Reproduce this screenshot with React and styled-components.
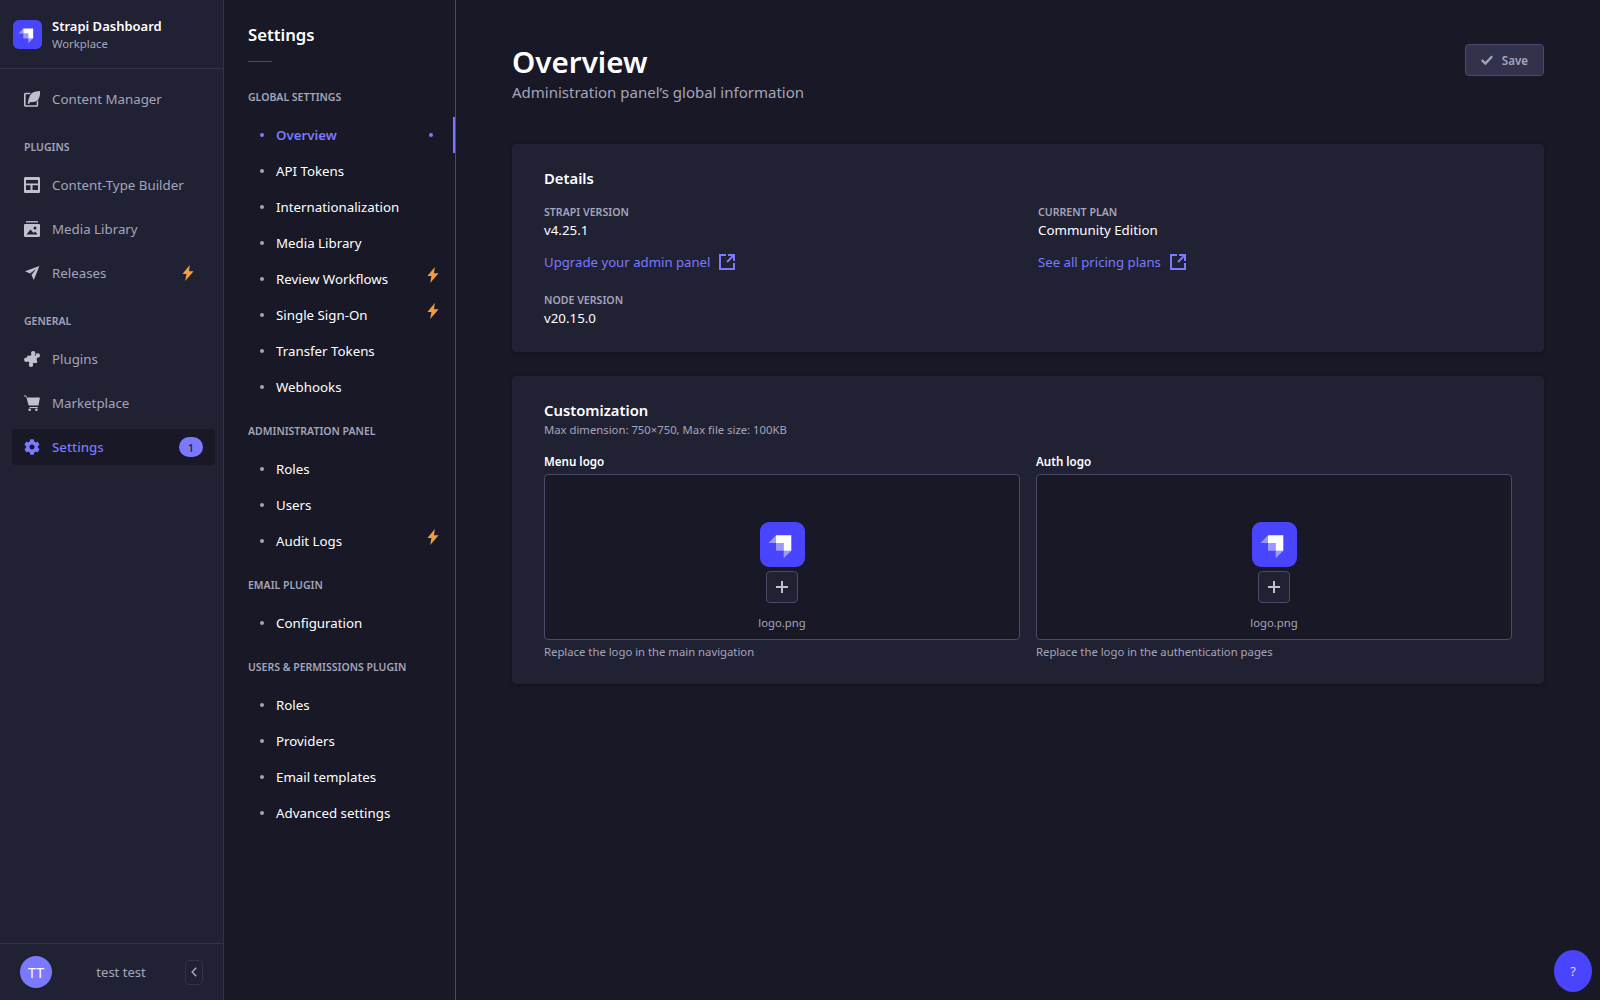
import React from "react";
import styled, { createGlobalStyle } from "styled-components";
import { FaCog } from "react-icons/fa";

const Global = createGlobalStyle`
  html, body { margin: 0; padding: 0; background: #181826; }
  * { box-sizing: border-box; }
  body { font-family: "Noto Sans", "Open Sans", sans-serif; }
`;

const Page = styled.div`
  display: flex;
  width: 1600px;
  height: 1000px;
  overflow: hidden;
  background: #181826;
  position: relative;
`;

const MainNav = styled.nav`
  width: 224px;
  flex: none;
  height: 100%;
  background: #212134;
  border-right: 1px solid #32324d;
  display: flex;
  flex-direction: column;
`;
const Brand = styled.header`
  height: 69px;
  flex: none;
  border-bottom: 1px solid #32324d;
  display: flex;
  align-items: center;
  padding-left: 13px;
  gap: 10px;
`;
const BrandText = styled.div`
  display: flex;
  flex-direction: column;
`;
const BrandName = styled.span`
  font-size: 13px;
  line-height: 18px;
  font-weight: 600;
  color: #ffffff;
`;
const BrandSub = styled.span`
  font-size: 11.3px;
  line-height: 17px;
  color: #a5a5ba;
`;
const NavBody = styled.div`
  flex: 1;
  padding: 12px 8px 0 12px;
  display: flex;
  flex-direction: column;
  gap: 8px;
`;
const NavLabel = styled.div`
  font-size: 10.5px;
  line-height: 16px;
  font-weight: 600;
  color: #a5a5ba;
  text-transform: uppercase;
  padding-left: 12px;
  margin: 14px 0 4px;
`;
const NavItem = styled.a`
  height: 36px;
  display: flex;
  align-items: center;
  padding: 0 12px;
  gap: 12px;
  border-radius: 4px;
  font-size: 13.3px;
  color: ${(p) => (p.$active ? "#7b79ff" : "#a5a5ba")};
  background: ${(p) => (p.$active ? "#181826" : "transparent")};
  font-weight: ${(p) => (p.$active ? 500 : 400)};
`;
const NavIcon = styled.span`
  width: 16px;
  height: 16px;
  flex: none;
  display: flex;
  color: ${(p) => (p.$active ? "#7b79ff" : "#c0c0cf")};
  svg { width: 16px; height: 16px; display: block; }
`;
const NavText = styled.span`
  flex: 1;
`;
const NavBolt = styled.span`
  display: flex;
  margin: -1px 9px 0 0;
`;
const Badge = styled.span`
  width: 24px;
  height: 20px;
  border-radius: 10px;
  background: #7b79ff;
  color: #212134;
  font-size: 11px;
  display: flex;
  align-items: center;
  justify-content: center;
`;
const NavFooter = styled.footer`
  height: 57px;
  flex: none;
  border-top: 1px solid #32324d;
  display: flex;
  align-items: center;
  padding: 0 20px;
`;
const Avatar = styled.span`
  width: 32px;
  height: 32px;
  border-radius: 50%;
  background: #7b79ff;
  color: #ffffff;
  font-size: 14px;
  display: flex;
  align-items: center;
  justify-content: center;
  flex: none;
`;
const UserName = styled.span`
  flex: 1;
  text-align: center;
  padding-left: 5px;
  font-size: 13px;
  color: #a5a5ba;
`;
const Collapse = styled.button`
  width: 18px;
  height: 25px;
  padding: 0;
  background: transparent;
  border: 1px solid #32324d;
  border-radius: 4px;
  display: flex;
  align-items: center;
  justify-content: center;
  color: #a5a5ba;
`;

const SubNav = styled.aside`
  width: 232px;
  flex: none;
  height: 100%;
  border-right: 1px solid #4a4a6a;
  padding-top: 23px;
  display: flex;
  flex-direction: column;
`;
const SubTitle = styled.h2`
  margin: 0 0 0 24px;
  font-size: 16.7px;
  line-height: 24px;
  font-weight: 600;
  color: #ffffff;
`;
const SubDivider = styled.div`
  width: 24px;
  height: 1px;
  background: #4a4a6a;
  margin: 14px 0 0 24px;
`;
const SubGroup = styled.section`
  display: flex;
  flex-direction: column;
  margin-top: 18px;
  &:first-of-type { margin-top: 27px; }
`;
const SubLabel = styled.div`
  margin-left: 24px;
  font-size: 10.5px;
  line-height: 16px;
  font-weight: 600;
  color: #a5a5ba;
  text-transform: uppercase;
  margin-bottom: 12px;
`;
const SubItem = styled.a`
  position: relative;
  height: 36px;
  display: flex;
  align-items: center;
  padding: 0 0 0 36px;
  gap: 12px;
  font-size: 13.3px;
  color: ${(p) => (p.$active ? "#7b79ff" : "#ffffff")};
  font-weight: ${(p) => (p.$active ? 600 : 400)};
`;
const Bullet = styled.span`
  width: 4px;
  height: 4px;
  border-radius: 50%;
  flex: none;
  background: ${(p) => (p.$active ? "#7b79ff" : "#a5a5ba")};
`;
const SubDotRight = styled(Bullet)`
  position: absolute;
  right: 22px;
  top: 16px;
`;
const SubBolt = styled.span`
  position: absolute;
  right: 16px;
  top: 6px;
  display: flex;
`;
const ActiveBar = styled.span`
  position: absolute;
  right: 0;
  top: 0;
  width: 2px;
  height: 36px;
  background: #7b79ff;
`;

const Main = styled.main`
  flex: 1;
  padding: 0 56px;
`;
const Head = styled.header`
  display: flex;
  justify-content: space-between;
  align-items: flex-start;
  padding-top: 44px;
  height: 144px;
`;
const H1 = styled.h1`
  margin: 0;
  font-size: 29.6px;
  line-height: 36px;
  font-weight: 600;
  color: #ffffff;
`;
const Subtitle = styled.p`
  margin: 0;
  font-size: 15px;
  line-height: 24px;
  color: #a5a5ba;
`;
const SaveButton = styled.button`
  width: 79px;
  height: 32px;
  background: #32324d;
  border: 1px solid #4a4a6a;
  border-radius: 4px;
  display: flex;
  align-items: center;
  justify-content: center;
  gap: 9px;
  padding: 0;
  color: #a5a5ba;
  font-family: inherit;
  font-size: 11.6px;
  font-weight: 600;
`;
const Card = styled.section`
  background: #212134;
  border-radius: 4px;
  padding: 22px 32px 24px;
  margin-bottom: 24px;
  box-shadow: 0 1px 4px rgba(3, 3, 5, 0.2);
`;
const CardTitle = styled.h3`
  margin: 0;
  font-size: 14.8px;
  line-height: 24px;
  font-weight: 600;
  color: #ffffff;
`;
const DetailGrid = styled.div`
  display: grid;
  grid-template-columns: 1fr 1fr;
  column-gap: 20px;
  margin-top: 14px;
`;
const Field = styled.div`
  display: flex;
  flex-direction: column;
`;
const FieldLabel = styled.span`
  font-size: 10.6px;
  line-height: 16px;
  font-weight: 600;
  color: #a5a5ba;
  text-transform: uppercase;
`;
const FieldValue = styled.span`
  font-size: 13.3px;
  line-height: 20px;
  color: #ffffff;
`;
const DocLink = styled.a`
  margin-top: 10px;
  display: inline-flex;
  align-items: center;
  gap: 9px;
  height: 24px;
  font-size: 13.2px;
  color: #7b79ff;
`;
const NodeField = styled(Field)`
  margin-top: 18px;
  grid-column: 1;
`;
const Hint = styled.p`
  margin: 0;
  font-size: 11.3px;
  line-height: 16px;
  color: #a5a5ba;
`;
const LogoGrid = styled.div`
  display: grid;
  grid-template-columns: 1fr 1fr;
  column-gap: 16px;
  margin-top: 16px;
`;
const LogoLabel = styled.div`
  font-size: 11.6px;
  line-height: 16px;
  font-weight: 600;
  color: #ffffff;
  margin-bottom: 4px;
`;
const DropBox = styled.div`
  height: 166px;
  background: #181826;
  border: 1px solid #4a4a6a;
  border-radius: 4px;
  display: flex;
  flex-direction: column;
  align-items: center;
  padding-top: 47px;
`;
const AddButton = styled.button`
  width: 32px;
  height: 32px;
  margin-top: 4px;
  background: #212134;
  border: 1px solid #4a4a6a;
  border-radius: 4px;
  padding: 0;
  display: flex;
  align-items: center;
  justify-content: center;
  color: #c0c0cf;
`;
const FileName = styled.span`
  margin-top: 12px;
  font-size: 11.3px;
  line-height: 16px;
  color: #a5a5ba;
`;
const HelpLine = styled(Hint)`
  margin-top: 4px;
`;
const HelpFab = styled.button`
  position: absolute;
  left: 1554px;
  top: 950px;
  width: 38px;
  height: 42px;
  border: 0;
  border-radius: 50%;
  background: #4945ff;
  color: #d9d8ff;
  font-family: inherit;
  font-size: 13px;
  padding: 0;
`;

const Logo = ({ size }) => (
  <svg width={size} height={size} viewBox="0 0 45 45" style={{ flex: "none", display: "block" }}>
    <rect width="45" height="45" rx="9" fill="#4945ff" />
    <path d="M16 13.3h15.3v15.4h-7.6V21H16z" fill="#fff" />
    <path d="M16 21h7.700v7.700H16z" fill="#fff" fillOpacity=".45" />
    <path d="M16 13.300V21H8.500zM23.700 28.700h7.600l-7.600 7.500z" fill="#fff" fillOpacity=".45" />
  </svg>
);
const Bolt = () => (
  <svg width="12" height="16" viewBox="0 0 12 16" fill="#f29d41">
    <path d="M7.800 0 .4 9h4L3.200 16 11.600 6.200H7z" />
  </svg>
);
const Feather = () => (
  <svg viewBox="0 0 16 16" fill="currentColor">
    <path d="M0 3.200A1.500 1.500 0 0 1 1.500 1.700H7L5.400 3.300H1.700a.1.100 0 0 0-.1.100v10.700c0 .1 0 .2.200.2h10.700c.1 0 .2 0 .2-.2V10.500l1.500-1.500v5.200a1.500 1.500 0 0 1-1.500 1.500H1.500A1.500 1.500 0 0 1 0 14.200z" />
    <path d="M16 0c.3 5.200-1 9.500-5.400 10.800-1.500.4-3.300.4-4.500.2l-.8 1.800H3.700C4.300 9.500 5.300 3.500 8.500 1.700 10.600.5 13.200.1 16 0z" />
  </svg>
);
const Layout = () => (
  <svg viewBox="0 0 16 16" fill="currentColor">
    <path fillRule="evenodd" d="M1.300 0h13.400C15.400 0 16 .6 16 1.300v13.400c0 .7-.6 1.300-1.300 1.300H1.300C.6 16 0 15.400 0 14.700V1.300C0 .6.6 0 1.300 0zM2 3v3.400h12V3zm0 5.300V13h4.500V8.300zm6.500 0V13H14V8.300z" />
  </svg>
);
const Images = () => (
  <svg viewBox="0 0 16 16" fill="currentColor">
    <path d="M2 0h12v1.600H2z" opacity=".85" />
    <path fillRule="evenodd" d="M1.200 3h13.600c.7 0 1.200.5 1.200 1.200v10.600c0 .7-.5 1.200-1.200 1.200H1.200C.5 16 0 15.500 0 14.800V4.200C0 3.500.5 3 1.200 3zm9.800 2.500a1.500 1.500 0 1 0 0 3 1.500 1.500 0 0 0 0-3zM2.500 13.500h11l-2.300-3-1.700 1.400-3-3.400z" />
  </svg>
);
const Plane = () => (
  <svg viewBox="0 0 16 16" fill="currentColor">
    <path d="M15.400 1 1 6.300l5 2.100L12 4 7.500 10l2.300 5z" />
  </svg>
);
const Puzzle = () => (
  <svg viewBox="0 0 16 16" fill="currentColor">
    <circle cx="9.200" cy="2.300" r="2.200" />
    <circle cx="13.800" cy="4.500" r="2.200" />
    <circle cx="2.300" cy="8.700" r="2.200" />
    <circle cx="7" cy="13.700" r="2.200" />
    <circle cx="11.500" cy="10.500" r="1.800" />
    <circle cx="4.500" cy="6" r="1.500" />
    <path d="M4.500 5.500 9.200 3 13 6l-.5 5L7 13 3 9.500z" />
  </svg>
);
const Cart = () => (
  <svg viewBox="0 0 16 16" fill="currentColor">
    <path d="M0 .4h1.700c.5 0 .9.3 1 .8L3 2.400h12.400c.4 0 .6.300.5.700l-1.400 6.800c-.1.400-.4.700-.8.700H5.400c-.4 0-.8-.3-.9-.7L2.200 1.600H0z" />
    <path d="M5.500 12h8.200v1.100H5.500z" />
    <circle cx="5.700" cy="14.700" r="1.300" />
    <circle cx="12.400" cy="14.700" r="1.300" />
  </svg>
);
const External = () => (
  <svg width="16" height="16" viewBox="0 0 16 16" fill="none" stroke="currentColor" strokeWidth="2">
    <path d="M7 1H1v14h14V9" />
    <path d="M8 8l6.500-6.500M9 1h6v6" />
  </svg>
);
const Check = () => (
  <svg width="12" height="10" viewBox="0 0 12 10" fill="none" stroke="#a5a5ba" strokeWidth="2.300">
    <path d="M.8 5l3.600 3.600L11.200 1.200" />
  </svg>
);
const Plus = () => (
  <svg width="14" height="14" viewBox="0 0 14 14" fill="currentColor">
    <path d="M6 1h2v5h5v2H8v5H6V8H1V6h5z" />
  </svg>
);
const Chevron = () => (
  <svg width="6" height="10" viewBox="0 0 6 10" fill="none" stroke="currentColor" strokeWidth="1.500">
    <path d="M5.200.800 1.200 5l4 4.200" />
  </svg>
);

const groups = [
  {
    label: "Global Settings",
    items: [
      { t: "Overview", active: true },
      { t: "API Tokens" },
      { t: "Internationalization" },
      { t: "Media Library" },
      { t: "Review Workflows", bolt: true },
      { t: "Single Sign-On", bolt: true },
      { t: "Transfer Tokens" },
      { t: "Webhooks" },
    ],
  },
  { label: "Administration Panel", items: [{ t: "Roles" }, { t: "Users" }, { t: "Audit Logs", bolt: true }] },
  { label: "Email Plugin", items: [{ t: "Configuration" }] },
  {
    label: "Users & Permissions Plugin",
    items: [{ t: "Roles" }, { t: "Providers" }, { t: "Email templates" }, { t: "Advanced settings" }],
  },
];

const LogoField = ({ label, help }) => (
  <div>
    <LogoLabel>{label}</LogoLabel>
    <DropBox>
      <Logo size={45} />
      <AddButton><Plus /></AddButton>
      <FileName>logo.png</FileName>
    </DropBox>
    <HelpLine>{help}</HelpLine>
  </div>
);

export default function App() {
  return (
    <Page>
      <Global />
      <MainNav>
        <Brand>
          <Logo size={29} />
          <BrandText>
            <BrandName>Strapi Dashboard</BrandName>
            <BrandSub>Workplace</BrandSub>
          </BrandText>
        </Brand>
        <NavBody>
          <NavItem><NavIcon><Feather /></NavIcon><NavText>Content Manager</NavText></NavItem>
          <NavLabel>Plugins</NavLabel>
          <NavItem><NavIcon><Layout /></NavIcon><NavText>Content-Type Builder</NavText></NavItem>
          <NavItem><NavIcon><Images /></NavIcon><NavText>Media Library</NavText></NavItem>
          <NavItem><NavIcon><Plane /></NavIcon><NavText>Releases</NavText><NavBolt><Bolt /></NavBolt></NavItem>
          <NavLabel>General</NavLabel>
          <NavItem><NavIcon><Puzzle /></NavIcon><NavText>Plugins</NavText></NavItem>
          <NavItem><NavIcon><Cart /></NavIcon><NavText>Marketplace</NavText></NavItem>
          <NavItem $active><NavIcon $active><FaCog /></NavIcon><NavText>Settings</NavText><Badge>1</Badge></NavItem>
        </NavBody>
        <NavFooter>
          <Avatar>TT</Avatar>
          <UserName>test test</UserName>
          <Collapse><Chevron /></Collapse>
        </NavFooter>
      </MainNav>
      <SubNav>
        <SubTitle>Settings</SubTitle>
        <SubDivider />
        {groups.map((g) => (
          <SubGroup key={g.label}>
            <SubLabel>{g.label}</SubLabel>
            {g.items.map((i) => (
              <SubItem key={i.t} $active={i.active}>
                <Bullet $active={i.active} />
                {i.t}
                {i.active && <SubDotRight $active />}
                {i.active && <ActiveBar />}
                {i.bolt && <SubBolt><Bolt /></SubBolt>}
              </SubItem>
            ))}
          </SubGroup>
        ))}
      </SubNav>
      <Main>
        <Head>
          <div>
            <H1>Overview</H1>
            <Subtitle>Administration panel’s global information</Subtitle>
          </div>
          <SaveButton><Check />Save</SaveButton>
        </Head>
        <Card>
          <CardTitle>Details</CardTitle>
          <DetailGrid>
            <Field>
              <FieldLabel>Strapi version</FieldLabel>
              <FieldValue>v4.25.1</FieldValue>
              <DocLink>Upgrade your admin panel <External /></DocLink>
            </Field>
            <Field>
              <FieldLabel>Current plan</FieldLabel>
              <FieldValue>Community Edition</FieldValue>
              <DocLink>See all pricing plans <External /></DocLink>
            </Field>
            <NodeField>
              <FieldLabel>Node version</FieldLabel>
              <FieldValue>v20.15.0</FieldValue>
            </NodeField>
          </DetailGrid>
        </Card>
        <Card>
          <CardTitle>Customization</CardTitle>
          <Hint>Max dimension: 750×750, Max file size: 100KB</Hint>
          <LogoGrid>
            <LogoField label="Menu logo" help="Replace the logo in the main navigation" />
            <LogoField label="Auth logo" help="Replace the logo in the authentication pages" />
          </LogoGrid>
        </Card>
      </Main>
      <HelpFab>?</HelpFab>
    </Page>
  );
}
